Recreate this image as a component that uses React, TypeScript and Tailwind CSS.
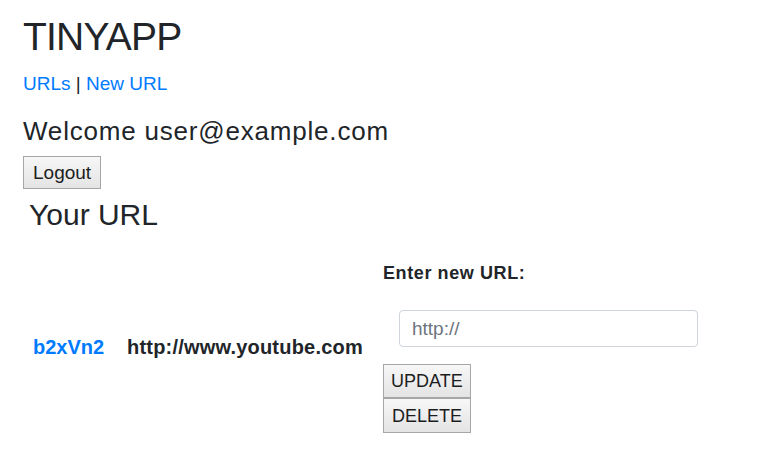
const OldButton = ({ children, className = '' }: { children: React.ReactNode; className?: string }) => {
  return (
    <button
      className={`border border-[#a6a6a6] bg-gradient-to-b from-[#f7f7f7] to-[#e4e4e4] text-[#1d1d1d] leading-none ${className}`}
    >
      {children}
    </button>
  );
};

const UrlRow = ({ shortUrl, longUrl }: { shortUrl: string; longUrl: string }) => {
  return (
    <div className="flex items-center">
      <div className="w-[94px] px-[11px] text-[20px] leading-[30px] font-bold">
        <a href="#" className="text-[#007bff]">{shortUrl}</a>
      </div>
      <div className="w-[257px] pl-[11px] text-[20px] leading-[30px] font-bold tracking-[0.2px]">{longUrl}</div>
      <div className="pl-[10px] py-[11px]">
        <form className="flex flex-col items-start">
          <label className="text-[18px] leading-[26px] font-bold tracking-[0.6px]">Enter new URL:</label>
          <input
            type="text"
            placeholder="http://"
            className="mt-[24px] ml-[16px] w-[299px] h-[37px] border border-[#ced4da] rounded-[4px] pl-[12px] text-[19px] placeholder:text-[#6c757d] outline-none"
          />
          <OldButton className="mt-[17px] h-[34px] px-[7px] text-[18px]">UPDATE</OldButton>
          <OldButton className="h-[35px] px-[8px] text-[18px]">DELETE</OldButton>
        </form>
      </div>
    </div>
  );
};

export default function App() {
  return (
    <div className="min-h-screen bg-white text-[#212529] font-['Liberation_Sans',Arial,sans-serif] pl-[23px] pt-[14px]">
      <h1 className="text-[39px] leading-[46px] tracking-[-0.8px]">TINYAPP</h1>
      <nav className="mt-[10px] text-[19px] leading-[28px]">
        <a href="#" className="text-[#007bff]">URLs</a> | <a href="#" className="text-[#007bff]">New URL</a>
      </nav>
      <h4 className="mt-[17px] text-[26px] leading-[32px] tracking-[0.8px]">Welcome user@example.com</h4>
      <OldButton className="mt-[9px] h-[33px] px-[9px] text-[19px]">Logout</OldButton>
      <h2 className="mt-[8px] ml-[6px] text-[30px] leading-[35px]">Your URL</h2>
      <div className="mt-[17px] -ml-[1px]">
        <UrlRow shortUrl="b2xVn2" longUrl="http://www.youtube.com" />
      </div>
    </div>
  );
}
